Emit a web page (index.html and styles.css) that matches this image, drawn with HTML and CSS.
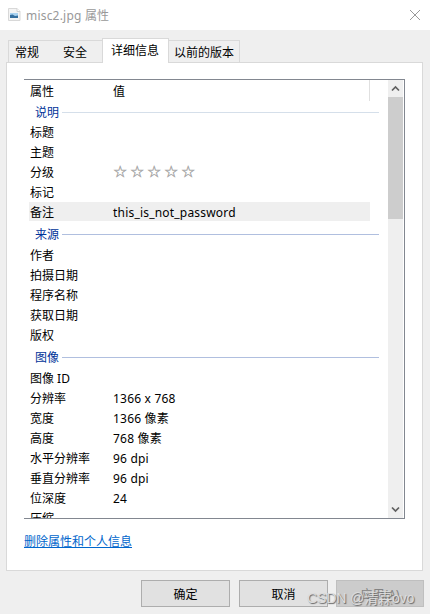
FILE: index.html
```html
<!DOCTYPE html>
<html lang="zh-CN">

<head>
    <meta charset="UTF-8">
    <meta name="viewport" content="width=device-width, initial-scale=1.0">
    <title>misc2.jpg 属性</title>
    <link rel="stylesheet" href="styles.css">
</head>

<body>

    <header class="titlebar">
        <svg class="file-icon" width="14" height="16" viewBox="0 0 14 16">
            <path d="M1.500 1.500H10l3 3v9H1.500z" fill="#f4f4f4" stroke="#d8d8d8" />
            <path d="M10 1.500v3h3" fill="#fff" stroke="#d2d2d2" />
            <path d="M3 6h8v5H3z" fill="#a9d2f0" />
            <path d="M3 8l2.500-.5L8 9l3-.5V11H3z" fill="#356f9f" />
        </svg>
        <h1>misc2.jpg 属性</h1>
        <svg class="close" width="12" height="12" viewBox="0 0 12 12">
            <path d="M1 1l10 10M11 1L1 11" stroke="#999" fill="none" />
        </svg>
    </header>

    <nav class="tabs">
        <span class="tab tab-general">常规</span>
        <span class="tab tab-security">安全</span>
        <span class="tab active">详细信息</span>
        <span class="tab tab-versions">以前的版本</span>
    </nav>

    <main class="panel">
        <div class="list">
            <div class="rows">
                <div class="row head"><span>属性</span><span>值</span></div>

                <div class="group first"><span>说明</span></div>
                <div class="row"><span>标题</span></div>
                <div class="row"><span>主题</span></div>
                <div class="row"><span>分级</span><span class="stars"><i>☆</i><i>☆</i><i>☆</i><i>☆</i><i>☆</i></span></div>
                <div class="row"><span>标记</span></div>
                <div class="row selected"><span>备注</span><span>this_is_not_password</span></div>

                <div class="group"><span>来源</span></div>
                <div class="row"><span>作者</span></div>
                <div class="row"><span>拍摄日期</span></div>
                <div class="row"><span>程序名称</span></div>
                <div class="row"><span>获取日期</span></div>
                <div class="row"><span>版权</span></div>

                <div class="group"><span>图像</span></div>
                <div class="row"><span>图像 ID</span></div>
                <div class="row"><span>分辨率</span><span>1366 x 768</span></div>
                <div class="row"><span>宽度</span><span>1366 像素</span></div>
                <div class="row"><span>高度</span><span>768 像素</span></div>
                <div class="row"><span>水平分辨率</span><span>96 dpi</span></div>
                <div class="row"><span>垂直分辨率</span><span>96 dpi</span></div>
                <div class="row"><span>位深度</span><span>24</span></div>
                <div class="row"><span>压缩</span></div>
            </div>
            <div class="scrollbar">
                <svg width="15" height="17" viewBox="0 0 15 17">
                    <path d="M4 10.500L7.500 7l3.500 3.500" stroke="#606060" stroke-width="1.700" fill="none" />
                </svg>
                <div class="thumb"></div>
                <svg width="15" height="17" viewBox="0 0 15 17">
                    <path d="M4 6.500L7.500 10 11 6.500" stroke="#606060" stroke-width="1.700" fill="none" />
                </svg>
            </div>
        </div>
        <a class="remove" href="#">删除属性和个人信息</a>
    </main>

    <footer>
        <button>确定</button>
        <button>取消</button>
        <button class="disabled" disabled>应用(A)</button>
    </footer>

    <div class="watermark">CSDN @清霖ovo</div>

</body>

</html>
```

FILE: styles.css
```css
* {
    box-sizing: border-box;
}

body {
    margin: 0;
    width: 430px;
    height: 614px;
    overflow: hidden;
    position: relative;
    background-color: #efefef;
    color: #000;
    font-family: "Noto Sans", "Noto Sans CJK SC", sans-serif;
    font-size: 12px;
}

/* Title bar */
.titlebar {
    display: flex;
    align-items: center;
    height: 30px;
    padding: 0 9px 0 7px;
    background-color: #fff;
}

.titlebar h1 {
    flex: 1;
    margin: 0 0 0 5px;
    font-size: 12px;
    font-weight: normal;
    letter-spacing: 0.2px;
    color: #999;
}

/* Tabs */
.tabs {
    display: flex;
    align-items: flex-end;
    height: 32px;
    padding-left: 8px;
}

.tab {
    height: 22px;
    border: 1px solid #d9d9d9;
    border-bottom: 0;
    line-height: 24px;
    white-space: nowrap;
}

.tab-general {
    width: 48px;
    padding-left: 6px;
    border-right: 0;
}

.tab-security {
    width: 46px;
    padding-left: 7px;
    border-left: 0;
    border-right: 0;
}

/* overlaps the top border of the panel */
.tab.active {
    width: 67px;
    height: 25px;
    padding-left: 8px;
    margin-bottom: -1px;
    line-height: 24px;
    background-color: #fff;
    position: relative;
}

.tab-versions {
    width: 71px;
    padding-left: 5px;
    border-left: 0;
}

.panel {
    width: 417px;
    height: 509px;
    margin-left: 6px;
    padding: 16px 17px;
    border: 1px solid #d9d9d9;
    background-color: #fff;
}

/* Property list */
.list {
    display: flex;
    justify-content: space-between;
    width: 381px;
    height: 440px;
    border: 1px solid #828790;
    border-left: 0;
    overflow: hidden;
}

.rows {
    width: 355px;
    padding-left: 5px;
}

.row {
    display: flex;
    height: 19px;
    width: 341px;
    margin-bottom: 1px;
    padding-left: 1px;
    line-height: 21px;
    white-space: nowrap;
}

.row span:first-child {
    width: 83px;
}

.row span:last-child {
    letter-spacing: 0.2px;
}

.row span:only-child {
    letter-spacing: 0;
}

.head {
    height: 21px;
    margin-bottom: 0;
    line-height: 23px;
    border-right: 1px solid #e0e0e0;
}

.selected {
    background-color: #efefef;
}

.group {
    display: flex;
    align-items: center;
    height: 23px;
    padding-top: 1px;
    padding-left: 6px;
    color: #003399;
}

.group.first {
    height: 21px;
}

.group::after {
    content: "";
    flex: 1;
    height: 1px;
    margin-left: 3px;
    background-color: #b0bfdf;
}

.group.first::after {
    background-color: #d5dfea;
}

.stars {
    display: flex;
    color: #aaa;
}

.stars i {
    width: 17px;
    font-family: "DejaVu Sans", sans-serif;
    font-style: normal;
    font-size: 16px;
    line-height: 19px;
    letter-spacing: 0;
    -webkit-text-stroke: 0.4px #aaa;
}

.scrollbar {
    display: flex;
    flex-direction: column;
    width: 16px;
    padding-right: 1px;
    background: linear-gradient(to right, #efefef 15px, #fff 15px);
}

.scrollbar svg:last-child {
    margin-top: auto;
}

.thumb {
    height: 122px;
    background-color: #cdcdcd;
}

.remove {
    display: block;
    width: 108px;
    margin-top: 14px;
    line-height: 18px;
    color: #0066cc;
    white-space: nowrap;
}

/* Buttons */
footer {
    display: flex;
    gap: 9px;
    padding: 9px 0 0 141px;
}

button {
    width: 89px;
    height: 27px;
    padding: 0;
    border: 1px solid #adadad;
    background-color: #e1e1e1;
    color: #000;
    font-family: inherit;
    font-size: 12px;
}

button.disabled {
    width: 88px;
    margin-left: -1px;
    border-color: #bfbfbf;
    background-color: #ccc;
    color: #838383;
}

.watermark {
    position: absolute;
    left: 307px;
    top: 588px;
    line-height: 20px;
    font-family: "Liberation Sans", "Noto Sans CJK SC", sans-serif;
    font-size: 14px;
    letter-spacing: -0.1px;
    color: #ddd;
    text-shadow: 1px 1px 1px #666;
    white-space: nowrap;
}
```
